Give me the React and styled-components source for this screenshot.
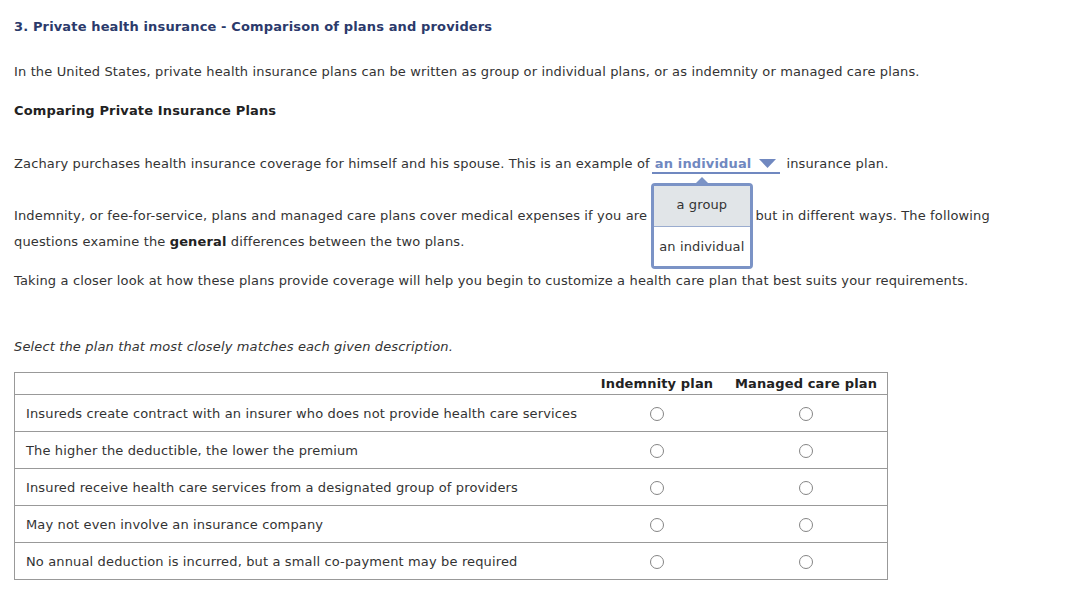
import React from "react";
import styled, { createGlobalStyle } from "styled-components";

const Global = createGlobalStyle`
  html, body { margin: 0; padding: 0; background: #fff; }
  body { font-family: "DejaVu Sans", Verdana, sans-serif; font-size: 13px; color: #333; letter-spacing: 0.14px; }
`;

const Page = styled.div`
  padding: 18px 14px 0 14px;
  width: 1020px;
`;

const Title = styled.h1`
  margin: 0;
  font-size: 13px;
  font-weight: bold;
  color: #2b3a6b;
  line-height: 18px;
`;

const P = styled.p`
  margin: ${(p) => p.$mt || 0}px 0 0 0;
  line-height: ${(p) => p.$lh || 18}px;
  font-style: ${(p) => (p.$italic ? "italic" : "normal")};
  font-weight: ${(p) => (p.$bold ? "bold" : "normal")};
  color: ${(p) => (p.$bold ? "#222" : "#333")};
`;

const SelectWrap = styled.span`
  position: relative;
  display: inline-block;
  margin-left: 2px;
  margin-right: 6px;
`;

const Select = styled.span`
  display: inline-flex;
  align-items: center;
  gap: 8px;
  padding: 0 4px 0 3px;
  border-bottom: 2px solid #7088c0;
  color: #7088c0;
  font-weight: bold;
  line-height: 17px;
`;

const Caret = styled.svg`
  width: 17px;
  height: 10px;
  display: block;
`;

const Popup = styled.div`
  position: absolute;
  left: -1px;
  top: 28px;
  width: 96px;
  border: 3px solid #7b93c6;
  border-radius: 4px;
  background: #fff;
  z-index: 2;
  &::before {
    content: "";
    position: absolute;
    top: -9px;
    left: 42px;
    border-left: 6px solid transparent;
    border-right: 6px solid transparent;
    border-bottom: 6px solid #7b93c6;
  }
`;

const Option = styled.div`
  height: ${(p) => (p.$first ? 38 : 39)}px;
  display: flex;
  align-items: center;
  justify-content: center;
  background: ${(p) => (p.$hl ? "#e1e5e8" : "#fff")};
  border-bottom: ${(p) => (p.$first ? "1px solid #9aaccf" : "none")};
  color: #333;
  font-weight: normal;
  padding-bottom: ${(p) => (p.$first ? 2 : 0)}px;
`;

const Blank = styled.span`
  display: inline-block;
  width: 104px;
`;

const Strong = styled.b`
  color: #222;
`;

const Table = styled.table`
  margin-top: 16px;
  width: 874px;
  border-collapse: collapse;
  border: 1px solid #999;
`;

const Th = styled.th`
  height: 21px;
  padding: 0;
  font-weight: bold;
  color: #222;
  text-align: center;
  width: ${(p) => p.$w || "auto"};
  border-bottom: 1px solid #999;
  line-height: 18px;
  vertical-align: middle;
`;

const Tr = styled.tr`
  border-bottom: 1px solid #999;
`;

const Td = styled.td`
  height: 36px;
  padding: 0 0 0 11px;
  text-align: ${(p) => (p.$center ? "center" : "left")};
  vertical-align: middle;
  ${(p) => (p.$center ? "padding: 0;" : "")}
`;

const Radio = styled.span`
  display: inline-block;
  width: 12px;
  height: 12px;
  border: 1px solid #858585;
  border-radius: 50%;
  vertical-align: middle;
  background: #fff;
`;

const rows = [
  "Insureds create contract with an insurer who does not provide health care services",
  "The higher the deductible, the lower the premium",
  "Insured receive health care services from a designated group of providers",
  "May not even involve an insurance company",
  "No annual deduction is incurred, but a small co-payment may be required",
];

export default function App() {
  return (
    <>
      <Global />
      <Page>
        <Title>3. Private health insurance - Comparison of plans and providers</Title>
        <P $mt={27}>
          In the United States, private health insurance plans can be written as group or individual plans, or as indemnity or managed care plans.
        </P>
        <P $mt={21} $bold>Comparing Private Insurance Plans</P>
        <P $mt={35}>
          Zachary purchases health insurance coverage for himself and his spouse. This is an example of
          <SelectWrap>
            <Select>
              an individual
              <Caret viewBox="0 0 17 10">
                <polygon points="0,0 17,0 8.5,9" fill="#7088c0" />
              </Caret>
            </Select>
            <Popup>
              <Option $first $hl>a group</Option>
              <Option>an individual</Option>
            </Popup>
          </SelectWrap>
          insurance plan.
        </P>
        <P $mt={29} $lh={26}>
          Indemnity, or fee-for-service, plans and managed care plans cover medical expenses if you are <Blank />but in different ways. The following questions examine the <Strong>general</Strong> differences between the two plans.
        </P>
        <P $mt={17}>
          Taking a closer look at how these plans provide coverage will help you begin to customize a health care plan that best suits your requirements.
        </P>
        <P $mt={48} $italic>Select the plan that most closely matches each given description.</P>
        <Table>
          <thead>
            <tr>
              <Th $w="auto"></Th>
              <Th $w="136px">Indemnity plan</Th>
              <Th $w="162px">Managed care plan</Th>
            </tr>
          </thead>
          <tbody>
            {rows.map((r) => (
              <Tr key={r}>
                <Td>{r}</Td>
                <Td $center><Radio /></Td>
                <Td $center><Radio /></Td>
              </Tr>
            ))}
          </tbody>
        </Table>
      </Page>
    </>
  );
}
